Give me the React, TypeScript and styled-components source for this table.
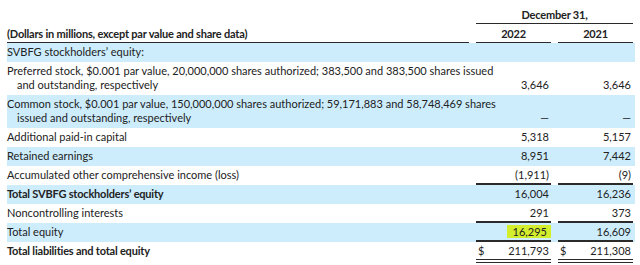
import React from "react";
import styled, { createGlobalStyle, css } from "styled-components";

const Global = createGlobalStyle`
  html, body { margin: 0; padding: 0; background: #fff; }
  body { font-family: "Lato", "Open Sans", sans-serif; color: #222; font-size: 11px; }
`;

const Page = styled.div`
  padding: 8px 0 0 7px;
  width: 640px;
  box-sizing: border-box;
`;

const Row = styled.div<{ $shade?: boolean }>`
  display: grid;
  grid-template-columns: 462px 75px 75px;
  column-gap: 7px;
  width: 628px;
  padding-right: 2px;
  box-sizing: border-box;
  background: ${(p) => (p.$shade ? "#cdedfd" : "transparent")};
  line-height: 14px;
`;

const HeadRow = styled(Row)`
  font-weight: 700;
  letter-spacing: -0.2px;
`;

type Rule = "none" | "single" | "double";

const ruleCss = (r?: Rule) =>
  r === "single"
    ? css`border-bottom: 2px solid #2a2a2a;`
    : r === "double"
    ? css`border-bottom: 4px double #2a2a2a;`
    : css`border-bottom: 2px solid transparent;`;

const Label = styled.div<{ $bold?: boolean }>`
  padding: 2px 0 1px 0;
  font-weight: ${(p) => (p.$bold ? 700 : 400)};
  letter-spacing: ${(p) => (p.$bold ? "-0.2px" : "0")};
  white-space: nowrap;
  border-bottom: 2px solid transparent;
`;

const Wrap = styled.span`
  display: block;
  padding-left: 10px;
`;

const Num = styled.div<{ $rule?: Rule; $dollar?: boolean }>`
  padding: 2px 2px 1px 2px;
  display: flex;
  align-items: flex-end;
  justify-content: ${(p) => (p.$dollar ? "space-between" : "flex-end")};
  ${(p) => ruleCss(p.$rule)}
`;

const HeadCell = styled.div<{ $top?: boolean; $span?: boolean }>`
  padding: ${(p) => (p.$top ? "0" : "3px")} 0 1px 0;
  text-align: center;
  grid-column: ${(p) => (p.$span ? "2 / 4" : "auto")};
  border-bottom: 1.5px solid #2a2a2a;
`;

const HeadLabel = styled.div`
  padding: 3px 0 1px 0;
  border-bottom: 1.5px solid #2a2a2a;
`;

const Mark = styled.span`
  background: #d3ee2c;
  padding: 0 4px 0 6px;
  margin: 0 -2px 0 0;
`;

type Line = {
  label: React.ReactNode;
  a: React.ReactNode;
  b: React.ReactNode;
  bold?: boolean;
  rule?: Rule;
  dollar?: boolean;
};

const lines: Line[] = [
  { label: "SVBFG stockholders’ equity:", a: "", b: "" },
  {
    label: (
      <>
        Preferred stock, $0.001 par value, 20,000,000 shares authorized; 383,500 and 383,500 shares issued
        <Wrap>and outstanding, respectively</Wrap>
      </>
    ),
    a: "3,646",
    b: "3,646",
  },
  {
    label: (
      <>
        Common stock, $0.001 par value, 150,000,000 shares authorized; 59,171,883 and 58,748,469 shares
        <Wrap>issued and outstanding, respectively</Wrap>
      </>
    ),
    a: "—",
    b: "—",
  },
  { label: "Additional paid-in capital", a: "5,318", b: "5,157" },
  { label: "Retained earnings", a: "8,951", b: "7,442" },
  { label: "Accumulated other comprehensive income (loss)", a: "(1,911)", b: "(9)", rule: "single" },
  { label: "Total SVBFG stockholders’ equity", a: "16,004", b: "16,236", bold: true },
  { label: "Noncontrolling interests", a: "291", b: "373", rule: "single" },
  { label: "Total equity", a: <Mark>16,295</Mark>, b: "16,609", rule: "single" },
  { label: "Total liabilities and total equity", a: "211,793", b: "211,308", bold: true, rule: "double", dollar: true },
];

export default function App() {
  return (
    <>
      <Global />
      <Page>
        <HeadRow>
          <div />
          <HeadCell $top $span>December 31,</HeadCell>
        </HeadRow>
        <HeadRow>
          <HeadLabel>(Dollars in millions, except par value and share data)</HeadLabel>
          <HeadCell>2022</HeadCell>
          <HeadCell>2021</HeadCell>
        </HeadRow>
        {lines.map((l, i) => (
          <Row key={i} $shade={i % 2 === 0}>
            <Label $bold={l.bold}>{l.label}</Label>
            <Num $rule={l.rule} $dollar={l.dollar}>
              {l.dollar && <span>$</span>}
              <span>{l.a}</span>
            </Num>
            <Num $rule={l.rule} $dollar={l.dollar}>
              {l.dollar && <span>$</span>}
              <span>{l.b}</span>
            </Num>
          </Row>
        ))}
      </Page>
    </>
  );
}
